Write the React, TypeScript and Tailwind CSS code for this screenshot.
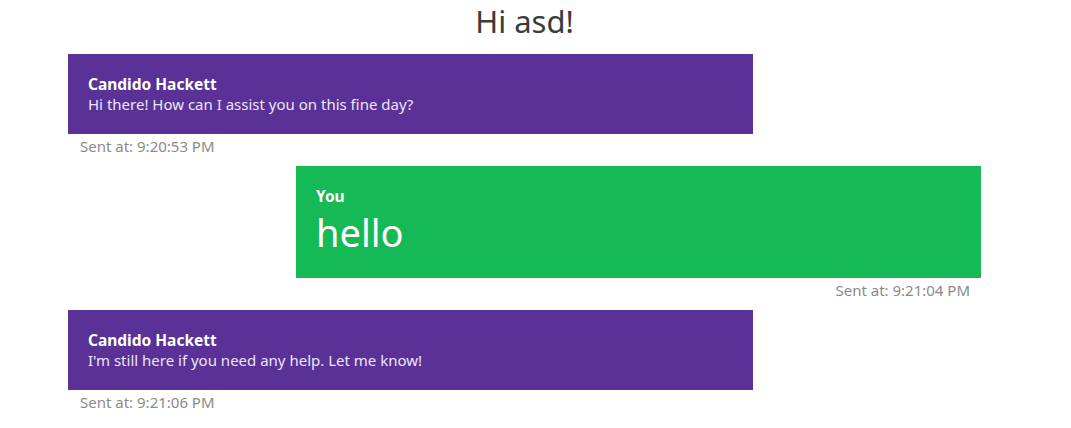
import React from "react";

const font = { fontFamily: '"Noto Sans", "Open Sans", sans-serif' };

function Stamp({ text, right }: { text: string; right?: boolean }) {
  return (
    <div
      className={`text-[15px] leading-[20px] text-[#8a8a8a] mt-[2px] mb-[10px] ${right ? "text-right pr-[11px]" : "pl-[12px]"}`}
    >
      {text}
    </div>
  );
}

export default function App() {
  return (
    <div className="w-[1071px] h-[428px] bg-white" style={font}>
      <div className="ml-[68px] w-[913px] flex flex-col">
        <h1 className="text-center text-[31px] leading-[42px] text-[#3b3b3b] mb-[12px]">Hi asd!</h1>

        <div className="w-[685px] self-start">
          <div className="bg-[#5a3196] text-white px-[20px] py-[20px]">
            <div className="text-[15.5px] leading-[20px] font-bold">Candido Hackett</div>
            <div className="text-[15px] leading-[20px] text-[#ece6f5]">Hi there! How can I assist you on this fine day?</div>
          </div>
          <Stamp text="Sent at: 9:20:53 PM" />
        </div>

        <div className="w-[685px] self-end">
          <div className="bg-[#15b955] text-white px-[20px] py-[20px]">
            <div className="text-[15.5px] leading-[20px] font-bold">You</div>
            <div className="text-[38px] leading-[52px]">hello</div>
          </div>
          <Stamp text="Sent at: 9:21:04 PM" right />
        </div>

        <div className="w-[685px] self-start">
          <div className="bg-[#5a3196] text-white px-[20px] py-[20px]">
            <div className="text-[15.5px] leading-[20px] font-bold">Candido Hackett</div>
            <div className="text-[15px] leading-[20px] text-[#ece6f5]">I'm still here if you need any help. Let me know!</div>
          </div>
          <Stamp text="Sent at: 9:21:06 PM" />
        </div>
      </div>
    </div>
  );
}
